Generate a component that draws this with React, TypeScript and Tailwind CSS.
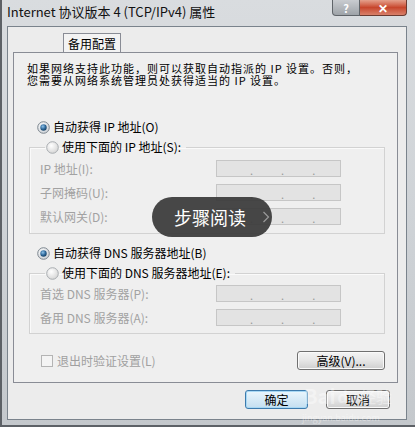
import React from 'react'

const FONT = { fontFamily: '"Noto Sans CJK SC", "Liberation Sans", sans-serif' }

function Radio({ checked }: { checked?: boolean }) {
  return (
    <svg width="13" height="13" viewBox="0 0 13 13" className="shrink-0">
      <defs>
        <radialGradient id={checked ? 'rg-on' : 'rg-off'} cx="0.4" cy="0.35" r="0.7">
          <stop offset="0" stopColor="#ffffff" />
          <stop offset="1" stopColor={checked ? '#c9ced4' : '#d4d4d4'} />
        </radialGradient>
        <radialGradient id="dot" cx="0.4" cy="0.35" r="0.7">
          <stop offset="0" stopColor="#8ec2ea" />
          <stop offset="0.6" stopColor="#2a6496" />
          <stop offset="1" stopColor="#163d5e" />
        </radialGradient>
      </defs>
      <circle
        cx="6.5"
        cy="6.5"
        r="5.8"
        fill={`url(#${checked ? 'rg-on' : 'rg-off'})`}
        stroke={checked ? '#7f8890' : '#a9adb1'}
        strokeWidth="1"
      />
      {checked && <circle cx="6.5" cy="6.5" r="3.2" fill="url(#dot)" />}
    </svg>
  )
}

function IpBox() {
  return (
    <div className="flex h-[17px] w-[125px] items-end gap-[28px] border border-[#c6c6c6] bg-[#e3e3e3] pb-[1px] pl-[33px] text-[11px] leading-[10px] text-[#9a9a9a]">
      <span>.</span>
      <span>.</span>
      <span>.</span>
    </div>
  )
}

function Field({ label }: { label: string }) {
  return (
    <div className="flex h-[17px] items-center">
      <span className="w-[176px] text-[12px] leading-[14px] text-[#a2a2a2]">{label}</span>
      <IpBox />
    </div>
  )
}

function WinButton({ children, focused }: { children: React.ReactNode; focused?: boolean }) {
  return (
    <div
      className={`flex h-[19px] items-center justify-center rounded-[3px] border text-[12px] leading-[14px] text-black ${
        focused
          ? 'border-[#3d7bad] bg-gradient-to-b from-[#eaf6fd] to-[#c4dff0] shadow-[inset_0_0_0_1px_#a8d8f4]'
          : 'border-[#707070] bg-gradient-to-b from-[#f4f4f4] via-[#e6e6e6] to-[#cfcfcf] shadow-[inset_0_0_0_1px_#fafafa]'
      }`}
    >
      {children}
    </div>
  )
}

export default function App() {
  return (
    <div
      style={FONT}
      className="relative flex h-[427px] w-[415px] flex-col overflow-hidden border-l-2 border-b-2 border-[#5d6166] bg-gradient-to-b from-[#d9dcdf] via-[#cfd3d7] to-[#c4c8cc]"
    >
      {/* Title bar */}
      <div className="flex h-[26px] shrink-0 items-start justify-between">
        <div className="pl-[5px] pt-[3px] text-[13px] leading-[18px] text-[#111]">
          Internet 协议版本 4 (TCP/IPv4) 属性
        </div>
        <div className="mr-[8px] flex">
          <div className="flex h-[16px] w-[28px] items-center justify-center rounded-bl-[4px] border border-t-0 border-[#5f6469] bg-gradient-to-b from-[#c9ccd0] to-[#9ea3a8] text-[11px] font-bold leading-[12px] text-white">
            ?
          </div>
          <div className="flex h-[16px] w-[47px] items-center justify-center rounded-br-[4px] border border-l-0 border-t-0 border-[#6b3a30] bg-gradient-to-b from-[#e4a08c] via-[#c7462c] to-[#d8806a] text-[12px] font-bold leading-[12px] text-white">
            ✕
          </div>
        </div>
      </div>

      {/* Client area */}
      <div className="ml-[5px] mr-[8px] flex h-[394px] flex-col border border-[#7a838c] bg-[#ececec]">
        {/* Tab */}
        <div className="ml-[55px] mt-[6px] flex h-[20px] w-[58px] items-center justify-center border border-b-0 border-[#898c95] bg-[#f3f3f3] text-[12px] leading-[14px] text-black">
          备用配置
        </div>
        <div className="ml-[5px] mr-[8px] -mt-[1px] flex h-[331px] flex-col border border-[#898c95] bg-[#efefef] pl-[13px] pr-[12px]">
          <div className="pt-[9px] text-[11px] leading-[12px] tracking-[1px] text-black">
            <div>如果网络支持此功能，则可以获取自动指派的 IP 设置。否则，</div>
            <div>您需要从网络系统管理员处获得适当的 IP 设置。</div>
          </div>

          <div className="ml-[10px] mt-[34px] flex h-[14px] items-center gap-[3px] text-[12px] leading-[14px] text-black">
            <Radio checked />
            <span>自动获得 IP 地址(O)</span>
          </div>

          <fieldset className="ml-[2px] mt-[5px] border border-[#d2d2d2] pb-[8px] pl-[10px] shadow-[inset_1px_1px_0_#fafafa]">
            <legend className="ml-[5px] flex h-[16px] items-center gap-[3px] pl-[1px] pr-[5px] text-[12px] leading-[14px] text-black">
              <Radio />
              <span>使用下面的 IP 地址(S):</span>
            </legend>
            <div className="mt-[5px] flex flex-col gap-[7px]">
              <Field label="IP 地址(I):" />
              <Field label="子网掩码(U):" />
              <Field label="默认网关(D):" />
            </div>
          </fieldset>

          <div className="ml-[10px] mt-[12px] flex h-[14px] items-center gap-[3px] text-[12px] leading-[14px] text-black">
            <Radio checked />
            <span>自动获得 DNS 服务器地址(B)</span>
          </div>

          <fieldset className="ml-[2px] mt-[5px] border border-[#d2d2d2] pb-[7px] pl-[10px] shadow-[inset_1px_1px_0_#fafafa]">
            <legend className="ml-[5px] flex h-[16px] items-center gap-[3px] pl-[1px] pr-[5px] text-[12px] leading-[14px] text-black">
              <Radio />
              <span>使用下面的 DNS 服务器地址(E):</span>
            </legend>
            <div className="mt-[4px] flex flex-col gap-[7px]">
              <Field label="首选 DNS 服务器(P):" />
              <Field label="备用 DNS 服务器(A):" />
            </div>
          </fieldset>

          <div className="mt-[17px] flex h-[19px] items-center justify-between">
            <div className="ml-[14px] flex items-center gap-[4px] text-[12px] leading-[14px] text-[#a0a0a0]">
              <div className="h-[12px] w-[12px] border border-[#b4b4b4] bg-[#f4f4f4]" />
              <span>退出时验证设置(L)</span>
            </div>
            <div className="w-[88px]">
              <WinButton>高级(V)...</WinButton>
            </div>
          </div>
        </div>

        <div className="mr-[16px] mt-[7px] flex justify-end gap-[18px]">
          <div className="w-[63px]">
            <WinButton focused>确定</WinButton>
          </div>
          <div className="w-[64px]">
            <WinButton>取消</WinButton>
          </div>
        </div>
      </div>

      {/* Baidu watermark */}
      <div className="pointer-events-none absolute left-[302px] top-[385px] flex items-center gap-[2px] text-[20px] font-bold leading-[22px] text-white/40">
        <span>Bai</span>
        <span className="text-[16px]">du</span>
        <span className="text-[16px] font-normal">经验</span>
      </div>
      <div className="pointer-events-none absolute left-[300px] top-[413px] text-[9px] leading-[10px] text-white/40">
        jingyan.baidu.com
      </div>

      {/* Step reading pill */}
      <div className="absolute left-[150px] top-[197px] flex h-[40px] w-[120px] items-center rounded-full bg-[#3d3d3d]/95 pl-[22px]">
        <span className="text-[18px] leading-[22px] text-white">步骤阅读</span>
        <svg width="8" height="12" viewBox="0 0 8 12" className="ml-[16px]">
          <path d="M1.5 1 L6.5 6 L1.5 11" fill="none" stroke="#9a9a9a" strokeWidth="1.2" />
        </svg>
      </div>
    </div>
  )
}
